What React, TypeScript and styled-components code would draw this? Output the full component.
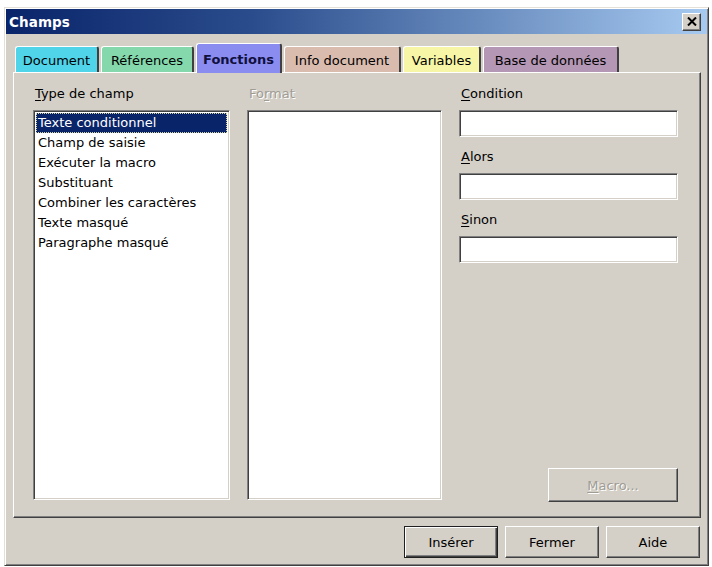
import styled, { createGlobalStyle } from "styled-components";

const GlobalStyle = createGlobalStyle`
  html, body {
    margin: 0;
    padding: 0;
    background: #ffffff;
  }
  body {
    font-family: "DejaVu Sans", "Liberation Sans", sans-serif;
    font-size: 13px;
    color: #000;
  }
`;

const Window = styled.div`
  box-sizing: border-box;
  margin: 7px 0 0 4px;
  width: 705px;
  height: 559px;
  background: #d4d0c8;
  border: 1px solid;
  border-color: #e4e0d8 #404040 #404040 #e4e0d8;
  box-shadow: inset 1px 1px #ffffff, inset -1px -1px #808080;
  padding: 1px;
  display: flex;
  flex-direction: column;
`;

const TitleBar = styled.div`
  height: 25px;
  display: flex;
  align-items: center;
  justify-content: space-between;
  padding: 0 6px 0 3px;
  background: linear-gradient(to right, #0a246a 0%, #2a4c8c 35%, #a6caf0 100%);
`;

const Title = styled.span`
  color: #fff;
  font-weight: bold;
  font-size: 13.5px;
  letter-spacing: 0.1px;
`;

const CloseButton = styled.div`
  box-sizing: border-box;
  width: 19px;
  height: 18px;
  background: #d4d0c8;
  border: 1px solid;
  border-color: #ffffff #404040 #404040 #ffffff;
  box-shadow: inset -1px -1px #808080;
  display: flex;
  align-items: center;
  justify-content: center;
`;

const Content = styled.div`
  flex: 1;
  display: flex;
  flex-direction: column;
  padding: 9px 7px 0 7px;
`;

const TabRow = styled.div`
  display: flex;
  align-items: flex-end;
  height: 29px;
  padding-left: 2px;
  gap: 2px;
`;

const Tab = styled.div<{ $color: string; $active?: boolean; $width: number }>`
  box-sizing: border-box;
  width: ${(p) => p.$width}px;
  height: ${(p) => (p.$active ? 30 : 26)}px;
  margin-bottom: ${(p) => (p.$active ? -1 : 0)}px;
  background: ${(p) => p.$color};
  border-top: 1px solid #ffffff;
  border-left: 1px solid #ffffff;
  border-right: 2px solid #404040;
  border-radius: 3px 3px 0 0;
  display: flex;
  align-items: center;
  justify-content: center;
  font-weight: ${(p) => (p.$active ? "bold" : "normal")};
  color: ${(p) => (p.$active ? "#101040" : "#000")};
  position: relative;
  z-index: ${(p) => (p.$active ? 1 : 0)};
  padding-top: 1px;
`;

const Panel = styled.div`
  box-sizing: border-box;
  width: 688px;
  height: 446px;
  border: 1px solid;
  border-color: #ffffff #404040 #404040 #ffffff;
  box-shadow: inset -1px -1px #808080;
  padding: 12px 20px 17px 19px;
  display: flex;
  gap: 17px;
`;

const Column = styled.div<{ $width: number }>`
  width: ${(p) => p.$width}px;
  display: flex;
  flex-direction: column;
`;

const Label = styled.div<{ $disabled?: boolean; $gap?: number }>`
  height: 18px;
  line-height: 18px;
  margin-top: ${(p) => p.$gap ?? 0}px;
  margin-bottom: 7px;
  padding-left: 2px;
  color: ${(p) => (p.$disabled ? "#a09c94" : "#000")};
  text-shadow: ${(p) => (p.$disabled ? "1px 1px #ffffff" : "none")};
  u {
    text-decoration-thickness: 1px;
    text-underline-offset: 2px;
  }
`;

const sunken = `
  box-sizing: border-box;
  background: #ffffff;
  border: 1px solid;
  border-color: #808080 #ffffff #ffffff #808080;
  box-shadow: inset 1px 1px #404040, inset -1px -1px #d4d0c8;
`;

const ListBox = styled.div`
  ${sunken}
  flex: 1;
  padding: 2px 2px;
  display: flex;
  flex-direction: column;
`;

const ListItem = styled.div<{ $selected?: boolean }>`
  height: 20px;
  line-height: 20px;
  padding-left: 2px;
  white-space: nowrap;
  box-sizing: border-box;
  background: ${(p) => (p.$selected ? "#0a246a" : "transparent")};
  color: ${(p) => (p.$selected ? "#ffffff" : "#000")};
  outline: ${(p) => (p.$selected ? "1px dotted #d8d4a0" : "none")};
  outline-offset: -1px;
`;

const TextField = styled.div`
  ${sunken}
  height: 27px;
`;

const ButtonBase = styled.div<{ $width: number; $height: number; $default?: boolean; $disabled?: boolean }>`
  box-sizing: border-box;
  width: ${(p) => p.$width}px;
  height: ${(p) => p.$height}px;
  background: #d4d0c8;
  border: 1px solid;
  border-color: ${(p) => (p.$default ? "#202020" : "#ffffff #404040 #404040 #ffffff")};
  box-shadow: ${(p) =>
    p.$default
      ? "inset 1px 1px #ffffff, inset -1px -1px #404040, inset -2px -2px #808080"
      : "inset -1px -1px #808080"};
  display: flex;
  align-items: center;
  justify-content: center;
  color: ${(p) => (p.$disabled ? "#a09c94" : "#000")};
  text-shadow: ${(p) => (p.$disabled ? "1px 1px #ffffff" : "none")};
  u {
    text-underline-offset: 2px;
  }
`;

const MacroRow = styled.div`
  margin-top: auto;
  display: flex;
  justify-content: flex-end;
  margin-bottom: -2px;
`;

const Footer = styled.div`
  display: flex;
  justify-content: flex-end;
  gap: 7px;
  margin-top: 8px;
  padding-right: 0;
`;

const tabs = [
  { label: "Document", color: "#4fd4ea", width: 84 },
  { label: "Références", color: "#84d8ac", width: 93 },
  { label: "Fonctions", color: "#8b8cf0", width: 86, active: true },
  { label: "Info document", color: "#dabcae", width: 117 },
  { label: "Variables", color: "#f6f6a6", width: 78 },
  { label: "Base de données", color: "#b497b4", width: 136 },
];

const fieldTypes = [
  "Texte conditionnel",
  "Champ de saisie",
  "Exécuter la macro",
  "Substituant",
  "Combiner les caractères",
  "Texte masqué",
  "Paragraphe masqué",
];

export default function App() {
  return (
    <>
      <GlobalStyle />
      <Window>
        <TitleBar>
          <Title>Champs</Title>
          <CloseButton>
            <svg width="10" height="9" viewBox="0 0 10 9">
              <path d="M1 0.5 L9 8.5 M9 0.5 L1 8.5" stroke="#000" strokeWidth="2" />
            </svg>
          </CloseButton>
        </TitleBar>
        <Content>
          <TabRow>
            {tabs.map((t) => (
              <Tab key={t.label} $color={t.color} $width={t.width} $active={t.active}>
                {t.label}
              </Tab>
            ))}
          </TabRow>
          <Panel>
            <Column $width={197}>
              <Label>
                <u>T</u>ype de champ
              </Label>
              <ListBox>
                {fieldTypes.map((f, i) => (
                  <ListItem key={f} $selected={i === 0}>
                    {f}
                  </ListItem>
                ))}
              </ListBox>
            </Column>
            <Column $width={195}>
              <Label $disabled>
                Fo<u>r</u>mat
              </Label>
              <ListBox />
            </Column>
            <Column $width={219}>
              <Label>
                <u>C</u>ondition
              </Label>
              <TextField />
              <Label $gap={11}>
                <u>A</u>lors
              </Label>
              <TextField />
              <Label $gap={11}>
                <u>S</u>inon
              </Label>
              <TextField />
              <MacroRow>
                <ButtonBase $width={130} $height={34} $disabled>
                  <span>
                    <u>M</u>acro...
                  </span>
                </ButtonBase>
              </MacroRow>
            </Column>
          </Panel>
          <Footer>
            <ButtonBase $width={94} $height={32} $default>
              Insérer
            </ButtonBase>
            <ButtonBase $width={94} $height={32}>
              Fermer
            </ButtonBase>
            <ButtonBase $width={94} $height={32}>
              Aide
            </ButtonBase>
          </Footer>
        </Content>
      </Window>
    </>
  );
}
